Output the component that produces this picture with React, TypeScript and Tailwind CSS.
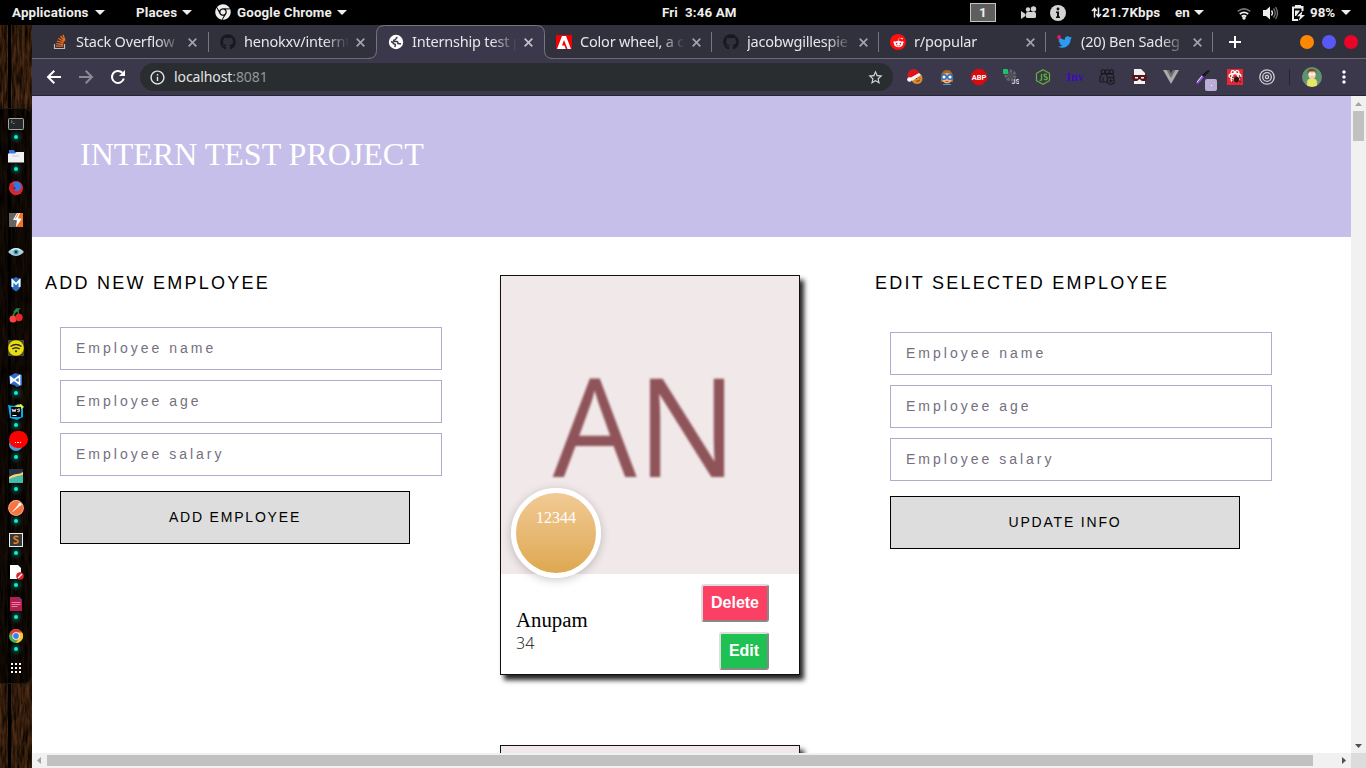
import React from "react";
import { FaChrome, FaGithub, FaRedditAlien, FaTwitter } from "react-icons/fa";
import { MdStarBorder, MdMoreVert, MdInfoOutline } from "react-icons/md";

type Kids = { children: React.ReactNode };

const Svg = ({ children, size = 16 }: Kids & { size?: number }) => (
  <svg width={size} height={size} viewBox="0 0 16 16" className="block shrink-0">
    {children}
  </svg>
);

const Caret = () => (
  <svg width="10" height="5" viewBox="0 0 10 5" className="block shrink-0">
    <path d="M0 0h10L5 5z" fill="#eeeeec" />
  </svg>
);

/* ---------- desktop top bar ---------- */

const TopBar = () => (
  <header className="flex h-[25px] shrink-0 items-center bg-black font-['Roboto',sans-serif] text-[13.33px] font-bold tracking-[0.15px] whitespace-nowrap text-[#eeeeec]">
    <div className="flex w-[650px] items-center pl-3">
      <div className="flex w-[124px] items-center gap-1.5">
        <span className="w-[77px]">Applications</span>
        <Caret />
      </div>
      <div className="flex w-[79px] items-center gap-[5px]">
        <span className="w-[41px]">Places</span>
        <Caret />
      </div>
      <div className="flex items-center">
        <FaChrome size={16} />
        <span className="ml-1.5 w-[100px]">Google Chrome</span>
        <Caret />
      </div>
    </div>
    <div className="w-[320px] pl-3 whitespace-pre">Fri  3:46 AM</div>
    <div className="flex h-[19px] w-[26px] items-center justify-center border border-[#c4c4c4] bg-[#5e5e5e]">1</div>
    <div className="ml-[25px] w-[17px]">
      <svg width="17" height="16" viewBox="0 0 17 16" fill="#d3d3d3">
        <circle cx="7" cy="4.500" r="2.200" />
        <circle cx="12.500" cy="4" r="2.700" />
        <rect x="5" y="7" width="10" height="6" rx="1.500" />
        <path d="M0 6l4.500 3v2L0 14z" />
      </svg>
    </div>
    <div className="ml-3 w-4">
      <Svg>
        <circle cx="8" cy="8" r="8" fill="#d3d3d3" />
        <circle cx="8" cy="4" r="1.400" fill="#111" />
        <path d="M6 6.500h3v5h1V13H6v-1.500h1V8H6z" fill="#111" />
      </Svg>
    </div>
    <div className="ml-[25px] flex w-[70px] items-center">
      <svg width="11" height="11" viewBox="0 0 11 11" fill="none" stroke="#eeeeec" strokeWidth="1.500" className="shrink-0">
        <path d="M3.500 10.500V1.500M1 4l2.500-2.700L5.500 4M7.500 .500v9M5.500 7l2 2.700L10 7" />
      </svg>
      <span>21.7Kbps</span>
    </div>
    <span className="ml-[14px] w-[19px] tracking-normal">en</span>
    <Caret />
    <div className="ml-[33px] w-[14px]">
      <svg width="14" height="14" viewBox="0 0 14 14" fill="none" strokeWidth="1.700" className="block">
        <path d="M.8 5.300q6.200-5 12.400 0" stroke="#777" />
        <path d="M2.800 8q4.200-3.400 8.400 0" stroke="#eeeeec" />
        <path d="M4.700 10.500q2.300-1.800 4.600 0" stroke="#eeeeec" />
        <circle cx="7" cy="12" r="1.700" fill="#eeeeec" />
      </svg>
    </div>
    <div className="ml-3 w-4">
      <Svg>
        <path d="M0 5h3l4-3.500v13L3 11H0z" fill="#eeeeec" />
        <path d="M8.500 5.500q2 2.500 0 5" stroke="#eeeeec" strokeWidth="1.300" fill="none" />
        <path d="M10.500 3.500q3.500 4.500 0 9M12.500 2q4 6 0 12" stroke="#777" strokeWidth="1.300" fill="none" />
      </Svg>
    </div>
    <div className="ml-[12px] w-[17px]">
      <Svg>
        <path d="M5 2V.8h4V2h2.500v4M7 15H2V2.500h9.500" fill="none" stroke="#eeeeec" strokeWidth="2" />
        <path d="M4 5.500h5L5 11H4zM11.500 6L6 11.200h3.200L7.500 16l6.500-6h-3.500z" fill="#eeeeec" />
      </Svg>
    </div>
    <span className="ml-[2px] w-[31px] tracking-normal">98%</span>
    <Caret />
  </header>
);

/* ---------- dock ---------- */

const dockItems: { icon: React.ReactNode; dot: boolean }[] = [
  {
    dot: true,
    icon: (
      <Svg>
        <rect x=".5" y="2.500" width="15" height="11" rx=".8" fill="#242a29" stroke="#a5a5a5" />
        <path d="M3 4.500l1.500 1.300L3 7M5 7.500h1.500" stroke="#999" strokeWidth=".8" fill="none" />
      </Svg>
    ),
  },
  {
    dot: true,
    icon: (
      <Svg>
        <path d="M1 2h5l1 2h8v5H1z" fill="#3b78e7" />
        <path d="M0 5.500h7L8.500 4H16v10.500H0z" fill="#f1f1f5" />
        <path d="M4 8h7" stroke="#ccc" />
      </Svg>
    ),
  },
  {
    dot: false,
    icon: (
      <Svg>
        <circle cx="8" cy="8" r="7" fill="#e12d2d" />
        <circle cx="8.500" cy="6.500" r="4.800" fill="#3478e5" />
        <path d="M1.500 3l2 1 3 .5-.5 2 2 1-2 3 4 1 4-4-1 6-6 2-5-4z" fill="#d9262e" />
        <path d="M5 7l3 1-2 2z" fill="#243f85" />
      </Svg>
    ),
  },
  {
    dot: false,
    icon: (
      <Svg>
        <path d="M1 1h14v14H1z" fill="#ed7428" />
        <path d="M1 1h8L6.500 6 9 7l-1 8H1z" fill="#646464" />
        <path d="M9 1L5 7.800l4 .4L8 15l6-8.200-4-.6L12 1z" fill="#fff" />
        <path d="M11 1L7.500 6.800h-.7L9.500 1.500zM15 6l-4 6 3-6z" fill="#ed7428" />
      </Svg>
    ),
  },
  {
    dot: false,
    icon: (
      <Svg>
        <path d="M0 8q8-8 16 0-8 8-16 0" fill="#a9cfdc" />
        <path d="M1 7q7-6 14 0-7-3-14 0" fill="#deeff3" />
        <circle cx="8" cy="8" r="2.500" fill="#4995ac" />
        <circle cx="8" cy="8" r="1.200" fill="#17333e" />
      </Svg>
    ),
  },
  {
    dot: false,
    icon: (
      <Svg>
        <path d="M3 2.500q3 0 5-1.500 2 1.500 5 1.500v6q0 4-5 7-5-3-5-7z" fill="#2672bd" />
        <path d="M4.500 11V4.500L8 8l3.500-3.500V11" fill="none" stroke="#fff" strokeWidth="1.800" />
      </Svg>
    ),
  },
  {
    dot: false,
    icon: (
      <Svg>
        <path d="M5 8q1-4 5-6 0 3 1 5M10 2L7 3l1.500-2H11z" fill="none" stroke="#268548" strokeWidth="1.400" />
        <circle cx="5" cy="11" r="3.500" fill="#ff4343" />
        <circle cx="11" cy="9.500" r="3.700" fill="#e32a2a" />
      </Svg>
    ),
  },
  {
    dot: false,
    icon: (
      <Svg>
        <rect width="16" height="16" fill="#4b4a31" />
        <circle cx="8" cy="8" r="7.800" fill="#ecde0c" />
        <path d="M2.500 6.500q5.500-4 11 0M4.300 9q3.700-2.700 7.400 0" fill="none" stroke="#272a2b" strokeWidth="1.500" />
        <circle cx="8" cy="11.300" r="1.100" fill="#272a2b" />
      </Svg>
    ),
  },
  {
    dot: true,
    icon: (
      <Svg>
        <path d="M1 4l3-1 3-2 7 2v10l-5 2-3-2-4-1z" fill="#316bc8" />
        <path d="M3 5.500v5l3-2.500zM6 8l5.500-4v8z" fill="none" stroke="#fff" strokeWidth="1.700" />
      </Svg>
    ),
  },
  {
    dot: true,
    icon: (
      <Svg>
        <path d="M0 1l6 1 4-2 5 3v10l-6 3-7-2z" fill="#09a9ec" />
        <path d="M7 2l6-2 3 3-4 3z" fill="#e5f042" />
        <rect x="3" y="3" width="10" height="10" fill="#080808" />
        <path d="M4 4.800l1 3 1-2.300 1 2.300 1-3M12 5.200q-2.500-.8-2.500.5 2.600.4 2.200 1.400-.6 1.100-2.400.4" fill="none" stroke="#fff" strokeWidth=".9" />
        <path d="M4.500 11.500h4" stroke="#fff" />
      </Svg>
    ),
  },
  {
    dot: true,
    icon: (
      <div className="relative size-4">
        <div className="absolute top-[1px] left-[1px] size-[14px] rounded-full bg-[#4f9fd6]" />
        <div className="absolute -top-[5px] left-[1px] flex h-[17px] w-[19px] items-center justify-center gap-px rounded-full bg-[#ff0000] pt-1.5">
          <i className="size-[1.5px] bg-white" />
          <i className="size-[1.5px] bg-white" />
          <i className="size-[1.5px] bg-white" />
        </div>
      </div>
    ),
  },
  {
    dot: true,
    icon: (
      <Svg>
        <rect x="1" y="1" width="14" height="14" fill="#253447" />
        <path d="M1 9q5-3 8-3t6-2v3L8 9l-7 3z" fill="#ffd166" />
        <path d="M1 11q4-2 7-2.500Q11 9 15 6.500V15H1z" fill="#48b9ad" />
      </Svg>
    ),
  },
  {
    dot: true,
    icon: (
      <Svg>
        <circle cx="8" cy="8" r="7.900" fill="#ffb79c" />
        <circle cx="8" cy="8" r="7.100" fill="#fb7440" />
        <path d="M3.500 12.500L11 4l1.300 1.500-7 6z" fill="#fff" />
        <circle cx="11.800" cy="4.300" r="1.600" fill="#fff" />
      </Svg>
    ),
  },
  {
    dot: true,
    icon: (
      <Svg>
        <rect x="1.500" y="1.500" width="13" height="13" fill="#37383a" stroke="#eee" />
        <path d="M10.500 4.800Q6 3.500 6 6q.3 1 2.300 1.700Q10.500 8.500 10 10q-1 2-4.500.8" fill="none" stroke="#e78320" strokeWidth="1.600" />
      </Svg>
    ),
  },
  {
    dot: true,
    icon: (
      <Svg>
        <path d="M2 1h8l3 3v11H2z" fill="#fff" />
        <circle cx="12" cy="12" r="3.800" fill="#d6262b" />
        <path d="M10 14l4-4" stroke="#fff" strokeWidth="1.200" />
      </Svg>
    ),
  },
  {
    dot: true,
    icon: (
      <Svg>
        <path d="M2 1h9l3 3v11H2z" fill="#b61b51" />
        <path d="M11 1l3 3h-3z" fill="#2e5d9e" />
        <path d="M3.500 6.500h9M3.500 8.500h9M3.500 10.500h6" stroke="#e4819e" />
      </Svg>
    ),
  },
  {
    dot: true,
    icon: (
      <Svg>
        <circle cx="8" cy="8" r="7" fill="#4caf50" />
        <path d="M1.900 4.500A7 7 0 0 1 14.100 4.500L8 5 5 9.500z" fill="#e53935" />
        <path d="M14.100 4.500A7 7 0 0 1 8 15L11 9.500 8.500 4.500z" fill="#ffc928" />
        <circle cx="8" cy="8" r="3.700" fill="#fff" />
        <circle cx="8" cy="8" r="2.900" fill="#3e7ff0" />
      </Svg>
    ),
  },
  {
    dot: false,
    icon: (
      <Svg>
        {[3, 7, 11].map((y) => [3, 7, 11].map((x) => <rect key={`${x}-${y}`} x={x} y={y} width="2" height="2" fill="#fff" />))}
      </Svg>
    ),
  },
];

const Dock = () => (
  <aside className="relative w-8 shrink-0 overflow-hidden bg-[#29180d] pt-[83px]">
    <svg width="32" height="743" className="absolute top-0 left-0">
      <filter id="grain" x="0" y="0" width="100%" height="100%" colorInterpolationFilters="sRGB">
        <feTurbulence type="fractalNoise" baseFrequency="0.4 0.05" numOctaves="4" seed="4" />
        <feColorMatrix values="0.5 0 0 0 -0.06  0.31 0 0 0 -0.05  0.18 0 0 0 -0.045  0 0 0 0 1" />
      </filter>
      <rect width="32" height="743" filter="url(#grain)" />
      <rect x="8" width="3" height="743" fill="#000" />
    </svg>
    <div className="relative h-[576px] rounded-r-lg border-y border-r border-[#1c1a19] bg-black/70">
      <div className="-mt-px flex flex-col">
        {dockItems.map((item, i) => (
          <div key={i} className="relative flex h-8 shrink-0 items-center justify-center">
            {item.icon}
            {item.dot && <i className="absolute bottom-px left-[14px] size-1 rounded-full bg-[#00f5d4] shadow-[0_0_4px_2px_#008c7a88]" />}
          </div>
        ))}
      </div>
    </div>
  </aside>
);

/* ---------- browser chrome ---------- */

const AdobeIcon = () => (
  <Svg>
    <rect y="1" width="16" height="14" fill="#f00000" />
    <path d="M1 15L6 2h4l5 13h-3.500L8 6l-2 5.500h2.500L9.800 15z" fill="#fff" />
  </Svg>
);

const GlobeIcon = () => (
  <Svg>
    <circle cx="8" cy="8" r="7.200" fill="#fff" />
    <path d="M9.500 3.200Q8.500 3.500 8 4.700q-.5 1.200-2 1.400-.8.700 0 1.400h3q1.500.6 1 2 1.500.4 3 .2M3 7.500q2.200.6 2.500 2.300 1.800.2 2 1.200 0 1-1 1.800" fill="none" stroke="#3c384b" strokeWidth="1.500" />
  </Svg>
);

const StackIcon = () => (
  <Svg>
    <path d="M2.500 10v4.500h10V10" stroke="#bcbbbb" strokeWidth="1.200" fill="none" />
    <path d="M4 12.200h7M4.200 9.700l7 .8M4.900 7l6.500 1.900M6.300 4.200l5.700 3.600M8.600 2l4 5M11 .8l2 5.700" stroke="#f26a17" strokeWidth="1.300" />
  </Svg>
);

const RedditIcon = () => (
  <div className="flex size-4 items-center justify-center rounded-full bg-[#ff1010] text-white">
    <FaRedditAlien size={11} />
  </div>
);

const TwitterIcon = () => (
  <div className="relative flex size-4 items-center justify-center text-[#2d9bf0]">
    <FaTwitter size={14} />
    <i className="absolute top-px left-0 size-1 rounded-full bg-[#f0145a]" />
  </div>
);

const tabs = [
  { title: "Stack Overflow", icon: <StackIcon />, width: "w-[168px]" },
  { title: "henokxv/internt", icon: <FaGithub size={16} color="#17191d" />, width: "w-[168px]" },
  { title: "Internship test p", icon: <GlobeIcon />, width: "w-[168px]", active: true },
  { title: "Color wheel, a c", icon: <AdobeIcon />, width: "w-[167px]" },
  { title: "jacobwgillespie", icon: <FaGithub size={16} color="#17191d" />, width: "w-[167px]" },
  { title: "r/popular", icon: <RedditIcon />, width: "w-[167px]" },
  { title: "(20) Ben Sadeg", icon: <TwitterIcon />, width: "w-[167px]" },
];

const TabStrip = () => (
  <div className="flex h-[34px] shrink-0 border-b border-[#6c6a76] bg-[#31313d] pl-[9px] font-['Noto_Sans',sans-serif] text-[14.5px] tracking-[-0.2px] text-[#e6e6ea]">
    {tabs.map((t, i) => (
      <div key={t.title} className={`relative flex h-[34px] shrink-0 items-center pl-[11px] ${t.width}`}>
        {t.active && (
          <svg width="186" height="34" viewBox="0 0 186 34" className="absolute top-0 -left-[9px]">
            <path d="M0 33.500Q8.500 33.500 8.500 25.500V8.500Q8.500.500 16.500.500H168.500Q176.500.500 176.500 8.500V25.500Q176.500 33.500 185 33.500V34H0z" fill="#3c384b" />
            <path d="M0 33.500Q8.500 33.500 8.500 25.500V8.500Q8.500.500 16.500.500H168.500Q176.500.500 176.500 8.500V25.500Q176.500 33.500 185 33.500" fill="none" stroke="#777580" />
          </svg>
        )}
        <div className="relative flex w-4 shrink-0 justify-center">{t.icon}</div>
        <div className="relative ml-2 w-[107px] shrink-0 overflow-hidden mask-r-from-75% mask-r-to-98% pb-px whitespace-nowrap">{t.title}</div>
        <svg width="9" height="9" viewBox="0 0 9 9" className="relative ml-[5px] shrink-0">
          <path d="M.7.7l7.600 7.600M8.300.7L.7 8.300" stroke={t.active ? "#c4c3ca" : "#a2a2aa"} strokeWidth="1.700" />
        </svg>
        {!t.active && i !== 1 && <i className="absolute top-[7px] right-0 h-5 w-px bg-[#777580]" />}
      </div>
    ))}
    <div className="flex w-11 items-center justify-center">
      <svg width="12" height="12" viewBox="0 0 12 12">
        <path d="M6 0v12M0 6h12" stroke="#fff" strokeWidth="2" />
      </svg>
    </div>
    <div className="ml-[43px] flex items-center gap-2">
      <i className="size-3.5 rounded-full bg-[#ff8800]" />
      <i className="size-3.5 rounded-full bg-[#5858f6]" />
      <i className="size-3.5 rounded-full bg-[#ea0427]" />
    </div>
  </div>
);

const extensions: React.ReactNode[] = [
  <Svg>
    <circle cx="10" cy="9.500" r="5.500" fill="#d98b35" />
    <path d="M1 9Q-1 1 7 0q5 1 6 6L5 9z" fill="#df151c" />
    <path d="M3 9l9-5 2 2-9 6z" fill="#f4f4f4" />
    <circle cx="2.500" cy="10.500" r="2.300" fill="#fff" />
    <path d="M9 9l1 1M12 8.500l1 1M9 12q2 1 4-1" stroke="#774009" fill="none" />
  </Svg>,
  <Svg>
    <path d="M2 13Q1 1 8 1t6 12z" fill="#a16b2c" />
    <path d="M3.500 6q4.500-4 9 0v6q-4.500 5-9 0z" fill="#f1b678" />
    <circle cx="5" cy="8" r="2.300" fill="#fff" stroke="#2670c5" strokeWidth="1.500" />
    <circle cx="11" cy="8" r="2.300" fill="#fff" stroke="#2670c5" strokeWidth="1.500" />
    <path d="M6.500 12.500h3" stroke="#cd3838" />
    <path d="M4 15.500h8" stroke="#2aaec8" />
  </Svg>,
  <Svg>
    <path d="M5 0h6l5 5v6l-5 5H5l-5-5V5z" fill="#dc090d" />
    <text x="8" y="10.700" textAnchor="middle" fontSize="7.500" fontWeight="bold" fill="#fff" fontFamily="Roboto">ABP</text>
  </Svg>,
  <Svg>
    <circle cx="7.500" cy="6.500" r="4" fill="none" stroke="#62656b" strokeWidth="4" strokeDasharray="2.500 1" />
    <circle cx="7.500" cy="6.500" r="3" fill="#4d5057" />
    <rect width="5" height="5" rx="1" fill="#1bc268" />
    <text x="8.500" y="15" fontSize="7" fontWeight="bold" fill="#ddd" fontFamily="Roboto">JS</text>
  </Svg>,
  <Svg>
    <path d="M8 .700l6.500 3.600v7.400L8 15.300l-6.500-3.600V4.300z" fill="none" stroke="#5fb43a" strokeWidth="1.200" />
    <path d="M6.500 5v5q0 2-2 1M12 5.500Q9 4.500 9 6t2 2q1.800.5 1 2-1 1.300-3.300 0" fill="none" stroke="#5fb43a" strokeWidth="1.300" />
  </Svg>,
  <span className="font-['Liberation_Serif',serif] text-[12px] leading-[14px] font-bold text-[#3d08c8]">Inv</span>,
  <Svg>
    <g fill="none" stroke="#17171c" strokeWidth="1.100">
      <circle cx="4" cy="2.800" r="2" />
      <circle cx="8.300" cy="2.800" r="2" />
      <circle cx="12.500" cy="2.800" r="2" />
      <path d="M1 13V9q0-3 3-4h9q2 1 2 3v1M1 13h7M4 12V8M8 5v4" />
      <circle cx="11.800" cy="11.800" r="3.500" />
      <path d="M11.800 9.800v4M9.800 11.800h4" />
    </g>
  </Svg>,
  <Svg>
    <path d="M3 0h7l4 4v11H3z" fill="#f2f2f2" />
    <path d="M1 6h15v4l-2 2h-3L8.500 10 6 12H3l-2-2z" fill="#5b1518" />
    <path d="M4 8h3v1.500H4zM10 8h3v1.500h-3z" fill="#eee" />
  </Svg>,
  <Svg>
    <path d="M0 1h16L8 15z" fill="#aaa" />
    <path d="M3.500 1h9L8 9z" fill="#707070" />
    <path d="M6 1h4L8 4.500z" fill="#3c384b" />
  </Svg>,
  <div className="relative size-4">
    <Svg>
      <path d="M1 14l6-8 2 2-6 7z" fill="#8c51e5" />
      <path d="M2 13l5-6" stroke="#eee" />
      <path d="M7 6l6-5 2 1-6 6z" fill="#16161c" />
    </Svg>
    <div className="absolute top-[10px] left-[10px] flex size-3 items-center justify-center rounded-xs bg-[#bcadd4]">
      <i className="size-px bg-white" />
    </div>
  </div>,
  <Svg>
    <rect width="16" height="16" fill="#eb2630" />
    <g fill="none" stroke="#fff" strokeWidth="1.300">
      <ellipse cx="8" cy="7" rx="6" ry="2.500" />
      <ellipse cx="8" cy="7" rx="6" ry="2.500" transform="rotate(60 8 7)" />
      <ellipse cx="8" cy="7" rx="6" ry="2.500" transform="rotate(-60 8 7)" />
    </g>
    <ellipse cx="9.500" cy="10.500" rx="2.500" ry="3" fill="#2e1416" />
    <path d="M5 8l9 5M5 13l9-5" stroke="#2e1416" />
  </Svg>,
  <Svg>
    <g fill="none" stroke="#d0d0d4" strokeWidth="1.300">
      <circle cx="8" cy="8" r="7.200" />
      <circle cx="8" cy="8" r="4.300" />
      <circle cx="8" cy="8" r="1.600" />
    </g>
  </Svg>,
];

const Toolbar = () => (
  <div className="flex h-[37px] shrink-0 items-center border-b border-[#262532] bg-[#3c384b] pl-[14px] text-white">
    <Svg>
      <path d="M15 8H2.500M8.300 1.800L2 8l6.300 6.200" fill="none" stroke="#fff" strokeWidth="2" />
    </Svg>
    <div className="ml-4">
      <Svg>
        <path d="M1 8h12.500M7.700 1.800L14 8l-6.300 6.200" fill="none" stroke="#8c8a96" strokeWidth="2" />
      </Svg>
    </div>
    <div className="ml-4">
      <Svg>
        <path d="M13.800 9.500a6 6 0 1 1-1.500-5.800" fill="none" stroke="#fff" strokeWidth="2" />
        <path d="M15 1v6H9z" fill="#fff" />
      </Svg>
    </div>
    <div className="ml-[14px] flex h-7 w-[753px] shrink-0 items-center rounded-full bg-[#292d30] pr-[9px] pl-[9px]">
      <MdInfoOutline size={17} color="#e6e6e6" />
      <div className="ml-2 flex-1 pb-px font-['Noto_Sans',sans-serif] text-[14px] tracking-[-0.1px] text-[#e4e4e6]">
        localhost<span className="text-[#94969a]">:8081</span>
      </div>
      <MdStarBorder size={17} color="#d6d6da" />
    </div>
    <div className="ml-[14px] flex shrink-0 gap-4">
      {extensions.map((e, i) => (
        <div key={i} className="flex size-4 items-center justify-center">
          {e}
        </div>
      ))}
    </div>
    <i className="ml-[14px] h-4 w-px bg-[#252431]" />
    <div className="ml-[12px]">
      <svg width="20" height="20" viewBox="0 0 20 20">
        <clipPath id="face">
          <circle cx="10" cy="10" r="10" />
        </clipPath>
        <g clipPath="url(#face)">
          <rect width="20" height="20" fill="#5d9370" />
          <path d="M5.500 20v-7q4.500-4 9 0v7z" fill="#e2ed5b" />
          <ellipse cx="10" cy="7.500" rx="3.800" ry="4.800" fill="#f0d0ad" />
          <path d="M5.500 7Q5 1.500 10 2t4.500 5L13 4.500H7.500z" fill="#7a4a28" />
          <path d="M5.500 14v6M14.500 14v6" stroke="#e9c69f" strokeWidth="1.500" />
          <circle cx="8.500" cy="7.500" r="1.200" fill="#fff" />
          <circle cx="11.500" cy="7.500" r="1.200" fill="#fff" />
        </g>
      </svg>
    </div>
    <MdMoreVert size={20} className="ml-[12px]" />
  </div>
);

/* ---------- web page ---------- */

const EmployeeForm = ({ title, action, gap }: { title: string; action: string; gap: string }) => (
  <section className="w-[410px] shrink-0 font-['Liberation_Sans',Arial,sans-serif]">
    <h2 className="text-[18px] leading-5 tracking-[2.25px] whitespace-nowrap text-black">{title}</h2>
    <form className={`ml-[15px] flex flex-col items-start gap-[10px] ${gap}`}>
      {["Employee name", "Employee age", "Employee salary"].map((p) => (
        <input
          key={p}
          placeholder={p}
          className="h-[43px] w-[382px] shrink-0 border border-[#b2a9cc] bg-white px-[15px] pb-[2px] text-[14px] tracking-[3px] outline-none placeholder:text-[#757080]"
        />
      ))}
      <button type="button" className="mt-[5px] h-[53px] w-[350px] border border-black bg-[#dddddd] text-[14px] tracking-[1.8px] text-black">
        {action}
      </button>
    </form>
  </section>
);

const EmployeeCard = ({ id, name, age, initials }: { id: string; name: string; age: string; initials: string }) => (
  <article className="relative flex h-[400px] w-[300px] shrink-0 flex-col border border-[#111] bg-white shadow-[4px_5px_5px_#000000dd]">
    <div className="flex h-[298px] shrink-0 items-center justify-center bg-[#f1e8e9] pr-[11px] pb-[2px]">
      <span className="scale-x-[0.97] font-['Open_Sans','Noto_Sans',sans-serif] text-[137px] leading-none font-[370] text-[#8f545a] blur-[1.3px]">{initials}</span>
    </div>
    <div className="absolute top-[212px] left-[10px] flex size-[90px] justify-center rounded-full border-5 border-white bg-linear-to-b from-[#f1ca94] to-[#dea850] pt-[15px] font-['Liberation_Serif',serif] text-[16px] leading-5 text-white shadow-[0_2px_10px_#00000038]">
      {id}
    </div>
    <div className="flex flex-1 justify-between pr-[30px] pl-[15px]">
      <div className="pt-[34px]">
        <p className="font-['Liberation_Serif',serif] text-[20.8px] leading-6 text-black">{name}</p>
        <p className="font-['Open_Sans',sans-serif] text-[16px] leading-[22px] font-light text-[#111]">{age}</p>
      </div>
      <div className="flex flex-col items-end gap-[10px] pt-[10px] font-['Liberation_Sans',Arial,sans-serif] text-[16px] font-bold text-white">
        <button className="h-[38px] w-[68px] rounded-[3px] border-2 border-t-[#dddddd] border-r-[#888888] border-b-[#888888] border-l-[#dddddd] bg-[#fb4064]">Delete</button>
        <button className="h-[38px] w-[50px] rounded-[3px] border-2 border-t-[#dddddd] border-r-[#888888] border-b-[#888888] border-l-[#dddddd] bg-[#1fc152]">Edit</button>
      </div>
    </div>
  </article>
);

const Page = () => (
  <main className="flex-1 overflow-hidden bg-white">
    <div className="h-[141px] bg-[#c6bfe9] pt-[38px] pl-12">
      <h1 className="font-['Liberation_Serif','Times_New_Roman',serif] text-[32px] leading-10 whitespace-nowrap text-white">INTERN TEST PROJECT</h1>
    </div>
    <div className="flex w-[1400px] pt-[36px] pl-[13px]">
      <EmployeeForm title="ADD NEW EMPLOYEE" action="ADD EMPLOYEE" gap="mt-[34px]" />
      <div className="ml-[45px] flex w-[375px] shrink-0 flex-col gap-[70px] pt-0.5">
        <EmployeeCard id="12344" name="Anupam" age="34" initials="AN" />
        <div className="h-[400px] w-[300px] shrink-0 border border-[#111] bg-[#f1e8e9] shadow-[4px_5px_5px_#000000dd]" />
      </div>
      <EmployeeForm title="EDIT SELECTED EMPLOYEE" action="UPDATE INFO" gap="mt-[39px]" />
    </div>
  </main>
);

const Arrow = ({ d, color }: { d: string; color: string }) => (
  <svg width="15" height="15" viewBox="0 0 15 15" className="block shrink-0">
    <path d={d} fill={color} />
  </svg>
);

export default function App() {
  return (
    <div className="flex h-[768px] w-[1366px] flex-col overflow-hidden bg-black">
      <TopBar />
      <div className="flex min-h-0 flex-1">
        <Dock />
        <div className="flex min-w-0 flex-1 flex-col">
          <TabStrip />
          <Toolbar />
          <div className="flex min-h-0 flex-1">
            <div className="flex min-w-0 flex-1 flex-col">
              <Page />
              <div className="flex h-[15px] shrink-0 items-center bg-[#f1f1f1]">
                <Arrow d="M9 4v7L5 7.500z" color="#a3a3a3" />
                <div className="h-[11px] w-[1266px] bg-[#c1c1c1]" />
                <div className="flex-1" />
                <Arrow d="M6 4v7l4-3.500z" color="#505050" />
              </div>
            </div>
            <div className="flex w-[15px] shrink-0 flex-col items-center bg-[#f1f1f1]">
              <Arrow d="M4 10h7L7.500 6z" color="#a3a3a3" />
              <div className="h-[30px] w-[11px] bg-[#c1c1c1]" />
              <div className="flex-1" />
              <Arrow d="M4 6h7l-3.500 4z" color="#505050" />
              <div className="size-[15px] bg-[#dcdcdc]" />
            </div>
          </div>
        </div>
      </div>
    </div>
  );
}
